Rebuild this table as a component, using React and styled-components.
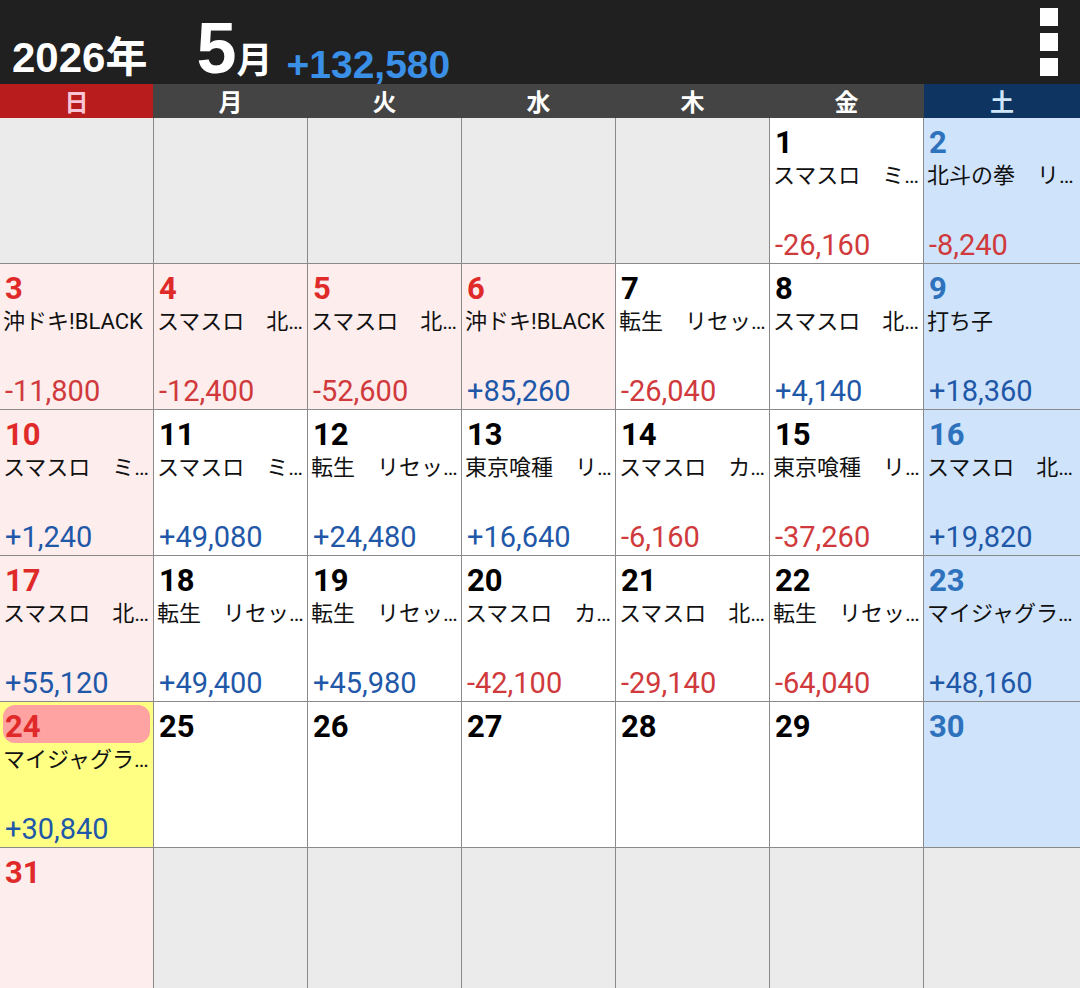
import React from 'react';
import styled, { createGlobalStyle } from 'styled-components';

const GlobalStyle = createGlobalStyle`
    html, body {
        margin: 0;
        padding: 0;
        overflow: hidden;
        background: #ffffff;
    }
`;

const palette = {
    header: '#202020',
    line: '#8a8a8a',
    red: '#e02a2a',
    blue: '#2e72bd',
    minus: '#d03a3c',
    plus: '#1f58a8',
};

const cellBg = {
    normal: '#ffffff',
    sun: '#fdeded',
    sat: '#cfe3fa',
    empty: '#ebebeb',
    today: '#ffff84',
};

const COLUMNS = 'repeat(6, 153px) 1fr';

const Screen = styled.div`
    width: 1080px;
    height: 988px;
    overflow: hidden;
    display: flex;
    flex-direction: column;
`;

const TopBar = styled.header`
    height: 84px;
    background: ${palette.header};
    display: flex;
    align-items: flex-end;
    padding-left: 12px;
    flex-shrink: 0;
    font-family: "Liberation Sans", "Noto Sans CJK JP", sans-serif;
    font-weight: bold;
    color: #ffffff;
`;

const Year = styled.div`
    font-size: 42px;
    line-height: 42px;
    margin-bottom: 5px;
`;

const Month = styled.div`
    font-size: 72px;
    line-height: 72px;
    margin-left: 49px;
    span {
        font-size: 36px;
        line-height: 1;
    }
`;

const Total = styled.div`
    font-size: 39px;
    line-height: 39px;
    color: #3a8fe6;
    margin-left: 14px;
`;

const Menu = styled.div`
    margin-left: auto;
    margin-right: 22px;
    align-self: flex-start;
    margin-top: 8px;
    display: flex;
    flex-direction: column;
    gap: 7px;
    i {
        display: block;
        width: 18px;
        height: 18px;
        background: #ffffff;
    }
`;

const WeekBar = styled.div`
    height: 34px;
    flex-shrink: 0;
    display: grid;
    grid-template-columns: ${COLUMNS};
    column-gap: 1px;
    background: #444444;
`;

const weekColors = {
    sun: { bg: '#b81c1c', fg: '#f8c6d6' },
    sat: { bg: '#0e3561', fg: '#cfe6fa' },
    normal: { bg: '#444444', fg: '#ffffff' },
};

const WeekDay = styled.div`
    background: ${p => weekColors[p.$kind].bg};
    color: ${p => weekColors[p.$kind].fg};
    font-family: "Noto Sans CJK JP", sans-serif;
    font-weight: bold;
    font-size: 24px;
    line-height: 34px;
    text-align: center;
`;

const Grid = styled.div`
    display: grid;
    grid-template-columns: ${COLUMNS};
    grid-auto-rows: 145px;
    gap: 1px;
    background: ${palette.line};
`;

const Cell = styled.div`
    background: ${p => cellBg[p.$kind]};
    display: flex;
    flex-direction: column;
    min-width: 0;
    overflow: hidden;
    padding: 0 0 0 3px;
    font-family: Roboto, "Noto Sans CJK JP", sans-serif;
`;

const DateNum = styled.div`
    margin: 3px 3px 0 0;
    height: 38px;
    box-sizing: border-box;
    padding: 5px 0 0 2px;
    font-size: 31px;
    line-height: 34px;
    font-weight: bold;
    color: ${p => p.$color};
    background: ${p => (p.$today ? '#ffa2a2' : 'transparent')};
    border-radius: 12px;
`;

const Name = styled.div`
    margin-top: 4px;
    font-size: 22px;
    line-height: 25px;
    color: #111111;
    white-space: nowrap;
    overflow: hidden;
    text-overflow: ellipsis;
`;

const Amount = styled.div`
    margin-top: auto;
    padding: 0 0 2px 2px;
    font-size: 29px;
    line-height: 32px;
    color: ${p => (p.$plus ? palette.plus : palette.minus)};
`;

const weekDays = [
    ['日', 'sun'],
    ['月', 'normal'],
    ['火', 'normal'],
    ['水', 'normal'],
    ['木', 'normal'],
    ['金', 'normal'],
    ['土', 'sat'],
];

const entries = {
    1: ['スマスロ　ミリオンゴッド', -26160],
    2: ['北斗の拳　リセット狙い', -8240],
    3: ['沖ドキ!BLACK', -11800],
    4: ['スマスロ　北斗の拳', -12400],
    5: ['スマスロ　北斗の拳', -52600],
    6: ['沖ドキ!BLACK', 85260],
    7: ['転生　リセット狙い', -26040],
    8: ['スマスロ　北斗の拳', 4140],
    9: ['打ち子', 18360],
    10: ['スマスロ　ミリオンゴッド', 1240],
    11: ['スマスロ　ミリオンゴッド', 49080],
    12: ['転生　リセット狙い', 24480],
    13: ['東京喰種　リセット狙い', 16640],
    14: ['スマスロ　カバネリ', -6160],
    15: ['東京喰種　リセット狙い', -37260],
    16: ['スマスロ　北斗の拳', 19820],
    17: ['スマスロ　北斗の拳', 55120],
    18: ['転生　リセット狙い', 49400],
    19: ['転生　リセット狙い', 45980],
    20: ['スマスロ　カバネリ', -42100],
    21: ['スマスロ　北斗の拳', -29140],
    22: ['転生　リセット狙い', -64040],
    23: ['マイジャグラーV', 48160],
    24: ['マイジャグラーV', 30840],
};

// GW holidays get the sunday look
const holidays = [4, 5, 6];
const TODAY = 24;

const formatAmount = v => (v >= 0 ? '+' : '-') + Math.abs(v).toLocaleString('en-US');

const buildCells = () => {
    const cells = [];
    for (let i = 0; i < 42; i++) {
        const day = i - 4;
        const col = i % 7;
        if (day < 1 || day > 31) {
            cells.push({ key: i, kind: 'empty' });
            continue;
        }
        const isSun = col === 0 || holidays.includes(day);
        const isSat = col === 6;
        let kind = 'normal';
        if (isSun) kind = 'sun';
        if (isSat) kind = 'sat';
        if (day === TODAY) kind = 'today';
        const color = isSun ? palette.red : isSat ? palette.blue : '#000000';
        cells.push({ key: i, kind, day, color, entry: entries[day] });
    }
    return cells;
};

const App = () => {
    const cells = buildCells();
    return (
        <Screen>
            <GlobalStyle />
            <TopBar>
                <Year>2026年</Year>
                <Month>
                    5<span>月</span>
                </Month>
                <Total>+132,580</Total>
                <Menu>
                    <i />
                    <i />
                    <i />
                </Menu>
            </TopBar>
            <WeekBar>
                {weekDays.map(([label, kind]) => (
                    <WeekDay key={label} $kind={kind}>
                        {label}
                    </WeekDay>
                ))}
            </WeekBar>
            <Grid>
                {cells.map(c => (
                    <Cell key={c.key} $kind={c.kind}>
                        {c.day && (
                            <DateNum $color={c.color} $today={c.day === TODAY}>
                                {c.day}
                            </DateNum>
                        )}
                        {c.entry && (
                            <>
                                <Name>{c.entry[0]}</Name>
                                <Amount $plus={c.entry[1] >= 0}>{formatAmount(c.entry[1])}</Amount>
                            </>
                        )}
                    </Cell>
                ))}
            </Grid>
        </Screen>
    );
};

export default App;
